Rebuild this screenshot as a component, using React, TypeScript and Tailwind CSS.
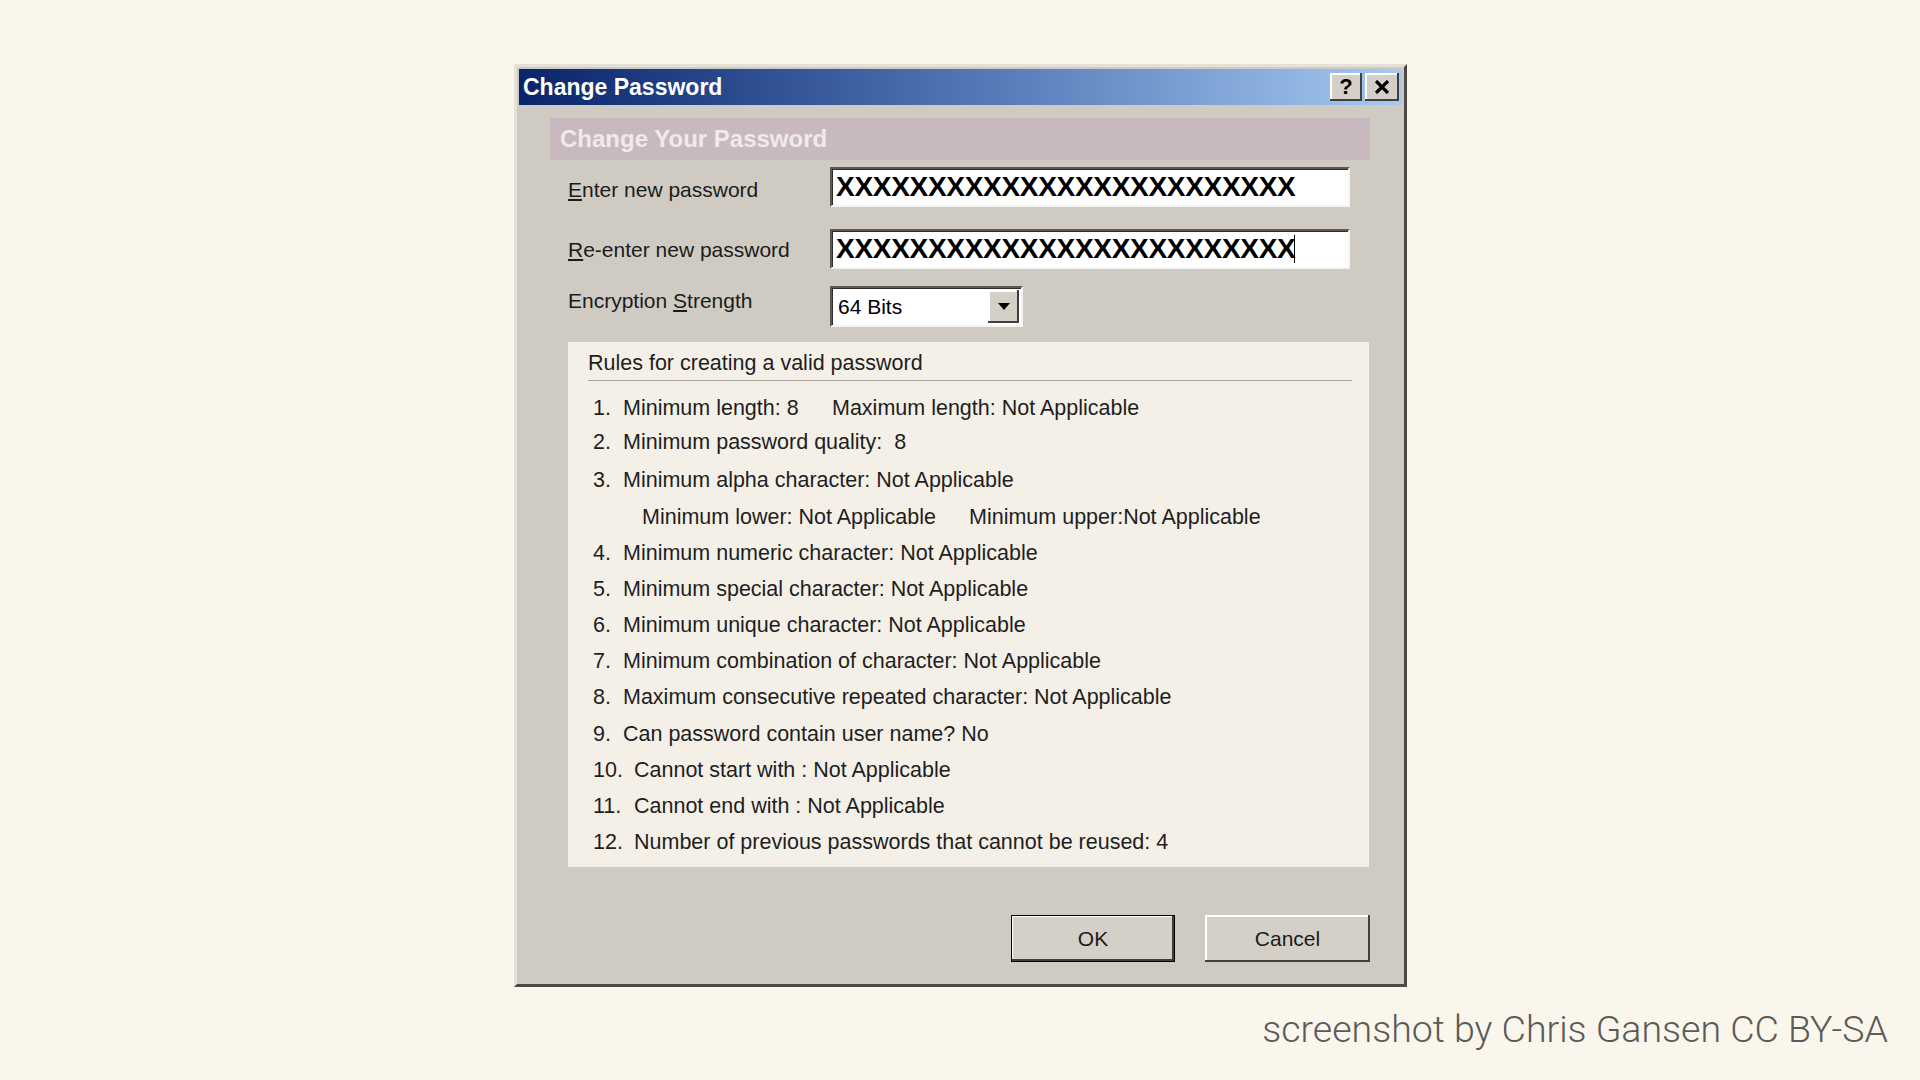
import React from 'react';

const FONT = { fontFamily: '"Liberation Sans", Arial, sans-serif' };

const rules: { n: string; text: string; wide?: boolean }[] = [
    { n: '4.', text: 'Minimum numeric character: Not Applicable' },
    { n: '5.', text: 'Minimum special character: Not Applicable' },
    { n: '6.', text: 'Minimum unique character: Not Applicable' },
    { n: '7.', text: 'Minimum combination of character: Not Applicable' },
    { n: '8.', text: 'Maximum consecutive repeated character: Not Applicable' },
    { n: '9.', text: 'Can password contain user name? No' },
    { n: '10.', text: 'Cannot start with : Not Applicable', wide: true },
    { n: '11.', text: 'Cannot end with : Not Applicable', wide: true },
    { n: '12.', text: 'Number of previous passwords that cannot be reused: 4', wide: true },
];

const PASSWORD = 'XXXXXXXXXXXXXXXXXXXXXXXXX';

const Field: React.FC<{ caret?: boolean }> = ({ caret }) => (
    <div className="h-[40px] flex-1 mr-[20px] bg-white border-2 border-t-[#5a5955] border-l-[#5a5955] border-r-[#f6f5f2] border-b-[#f6f5f2] shadow-[inset_1px_1px_0_#2e2d2a] flex items-center pl-[4px]">
        <span className="text-[28px] font-bold tracking-[-0.3px] text-black leading-none">{PASSWORD}</span>
        {caret && <span className="w-[1px] h-[28px] bg-black -ml-[1px]" />}
    </div>
);

const TitleButton: React.FC<{ children: React.ReactNode; w: string }> = ({ children, w }) => (
    <div className={`${w} h-[28px] bg-[#d4d0c8] flex items-center justify-center shadow-[inset_-2px_-2px_0_#404040,inset_2px_2px_0_#ffffff] text-[22px] font-bold text-black leading-none`}>
        {children}
    </div>
);

export default function App() {
    return (
        <div className="min-h-screen w-full bg-[#faf6eb] flex flex-col" style={FONT}>
            <div className="ml-[514px] mt-[64px] w-[893px] h-[923px] bg-[#cfcbc3] border-[3px] border-t-[#e4e1da] border-l-[#e4e1da] border-r-[#4a4946] border-b-[#4a4946] p-[2px] flex flex-col text-[#1b1b1b]">
                {/* title bar */}
                <div className="h-[36px] bg-gradient-to-r from-[#0a246a] via-[#5074b4] to-[#a6caf0] flex items-center pl-[4px] pr-[3px]">
                    <span className="text-[23px] font-bold text-white flex-1">Change Password</span>
                    <div className="flex gap-[3px]">
                        <TitleButton w="w-[32px]">?</TitleButton>
                        <TitleButton w="w-[34px]">
                            <svg width="16" height="14" viewBox="0 0 16 14">
                                <path d="M2 1 L14 13 M14 1 L2 13" stroke="#000" strokeWidth="3.2" />
                            </svg>
                        </TitleButton>
                    </div>
                </div>

                <div className="flex flex-col pl-[31px] pr-[32px]">
                    <div className="mt-[13px] h-[42px] bg-[#c8b9be] flex items-center pl-[10px]">
                        <span className="text-[24px] font-bold text-[#f1eaec]">Change Your Password</span>
                    </div>

                    <div className="flex flex-col pl-[18px]">
                        <div className="mt-[7px] flex items-center">
                            <div className="w-[262px] text-[21px] mt-[5px]"><u>E</u>nter new password</div>
                            <Field />
                        </div>
                        <div className="mt-[22px] flex items-center">
                            <div className="w-[262px] text-[21px] mt-[2px]"><u>R</u>e-enter new password</div>
                            <Field caret />
                        </div>
                        <div className="mt-[17px] flex items-start">
                            <div className="w-[262px] text-[21px] -mt-[1px]">Encryption <u>S</u>trength</div>
                            <div className="w-[193px] h-[41px] bg-white border-2 border-t-[#5a5955] border-l-[#5a5955] border-r-[#f6f5f2] border-b-[#f6f5f2] shadow-[inset_1px_1px_0_#2e2d2a] flex items-center">
                                <span className="flex-1 pl-[6px] text-[21px] text-black">64 Bits</span>
                                <div className="w-[31px] h-[33px] mr-[2px] bg-[#d4d0c8] shadow-[inset_-2px_-2px_0_#404040,inset_2px_2px_0_#ffffff] flex items-center justify-center">
                                    <svg width="12" height="7" viewBox="0 0 12 7">
                                        <path d="M0 0 H12 L6 7 Z" fill="#000" />
                                    </svg>
                                </div>
                            </div>
                        </div>

                        <div className="mt-[15px] mr-[1px] h-[525px] bg-[#f4f0e8] flex flex-col text-[21.5px] text-[#1e1e1e]">
                            <div className="pl-[20px] pt-[9px] leading-[24px]">Rules for creating a valid password</div>
                            <div className="ml-[20px] mr-[17px] mt-[5px] h-[1px] bg-[#a8a4a0]" />
                            <div className="mt-[9px] flex flex-col pl-[25px]">
                                <div className="h-[36.2px] flex items-center">
                                    <span className="w-[30px]">1.</span>
                                    <span className="w-[209px]">Minimum length: 8</span>
                                    <span>Maximum length: Not Applicable</span>
                                </div>
                                <div className="h-[36.2px] flex items-center -mt-[2px] mb-[2px]">
                                    <span className="w-[30px]">2.</span>
                                    <span className="whitespace-pre">Minimum password quality:  8</span>
                                </div>
                                <div className="h-[36.2px] flex items-center">
                                    <span className="w-[30px]">3.</span>
                                    <span>Minimum alpha character: Not Applicable</span>
                                </div>
                                <div className="h-[36.2px] flex items-center pl-[49px]">
                                    <span className="w-[327px]">Minimum lower: Not Applicable</span>
                                    <span>Minimum upper:Not Applicable</span>
                                </div>
                                {rules.map((r) => (
                                    <div key={r.n} className="h-[36.2px] flex items-center">
                                        <span className={r.wide ? 'w-[41px]' : 'w-[30px]'}>{r.n}</span>
                                        <span>{r.text}</span>
                                    </div>
                                ))}
                            </div>
                        </div>
                    </div>

                    <div className="mt-[48px] flex justify-end gap-[30px]">
                        <button className="w-[164px] h-[47px] border border-black bg-[#d4d0c8] shadow-[inset_-2px_-2px_0_#404040,inset_1px_1px_0_#ffffff] text-[21px] text-[#1b1b1b]">
                            OK
                        </button>
                        <button className="w-[165px] h-[47px] bg-[#d4d0c8] shadow-[inset_-2px_-2px_0_#404040,inset_2px_2px_0_#ffffff] text-[21px] text-[#1b1b1b]">
                            Cancel
                        </button>
                    </div>
                </div>
            </div>

            <div
                className="self-end mr-[32px] mt-[19px] text-[37.5px] font-light text-[#5a5a5a] leading-[46px]"
                style={{ fontFamily: 'Roboto, "Liberation Sans", sans-serif' }}
            >
                screenshot by Chris Gansen CC BY-SA
            </div>
        </div>
    );
}
